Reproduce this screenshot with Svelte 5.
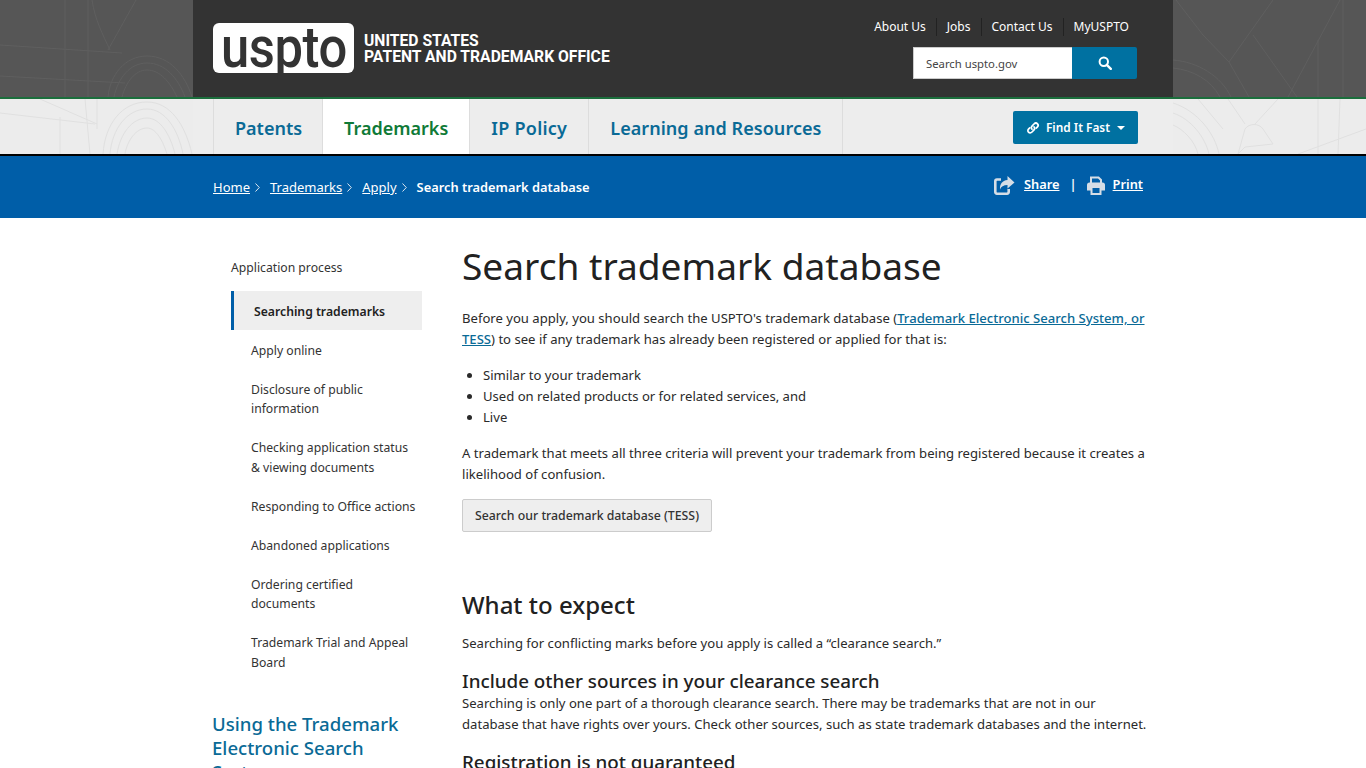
<script>
  const topLinks = ['About Us', 'Jobs', 'Contact Us', 'MyUSPTO'];
  const tabs = ['Patents', 'Trademarks', 'IP Policy', 'Learning and Resources'];
  const crumbs = ['Home', 'Trademarks', 'Apply'];
  const items = [
    'Apply online',
    'Disclosure of public information',
    'Checking application status &\u00a0viewing documents',
    'Responding to Office actions',
    'Abandoned applications',
    'Ordering certified documents',
    'Trademark Trial and Appeal Board'
  ];
</script>

<div class="page">
  <header class="top">
    <svg class="art" viewBox="0 0 193 97" aria-hidden="true">
      <g fill="none" stroke="#5f5f5f" stroke-width="1">
        <path d="M0 45L122 53M0 76L125 83M65 0V97M88 0V97M92 0C95 20 103 35 110 50M136 0L108 50" />
        <path d="M108 97C110 75 125 56 147 56C170 56 185 75 192 97M114 97C118 78 130 63 147 63C165 63 178 78 185 97M122 97C126 82 135 70 147 70C160 70 170 82 177 97" />
      </g>
    </svg>
    <svg class="art right" viewBox="0 0 193 97" aria-hidden="true">
      <g fill="none" stroke="#5f5f5f" stroke-width="1">
        <path d="M3 0L30 35L56 62L76 97M100 0L56 62M80 35L124 97M167 0L115 97M170 0V97M145 40V97" />
        <path d="M0 60C25 62 48 76 58 97M0 68C20 70 38 80 47 97" />
      </g>
    </svg>
    <div class="top-inner">
      <a class="brand" href="#top">
        <span class="logo"><span class="logo-text">uspto</span></span>
        <span class="office">UNITED STATES<br />PATENT AND TRADEMARK OFFICE</span>
      </a>
      <div class="top-right">
        <ul class="top-links">
          {#each topLinks as l}
            <li>{l}</li>
          {/each}
        </ul>
        <div class="search">
          <span class="search-field">Search uspto.gov</span>
          <span class="search-btn">
            <svg width="14" height="14" viewBox="0 0 14 14"><circle cx="5.800" cy="5.800" r="4.200" fill="none" stroke="#fff" stroke-width="2"/><path d="M8.800 8.800L12.800 12.800" stroke="#fff" stroke-width="2.400" stroke-linecap="round"/></svg>
          </span>
        </div>
      </div>
    </div>
  </header>

  <nav class="nav">
    <svg class="art" viewBox="0 0 193 55" aria-hidden="true">
      <g fill="none" stroke="#e0e0e0" stroke-width="1">
        <path d="M0 14L95 25M60 18V55M85 0L90 55M97 0V30M40 0L97 25" />
        <path d="M103 55C105 25 122 3 147 3C170 3 185 25 192 55M110 55C112 30 127 10 147 10C165 10 178 30 183 55M117 55C120 35 132 19 147 19C160 19 170 35 175 55M125 55C127 42 136 29 147 29C156 29 163 42 167 55" />
      </g>
    </svg>
    <svg class="art right" viewBox="0 0 193 55" aria-hidden="true">
      <g fill="none" stroke="#e0e0e0" stroke-width="1">
        <path d="M0 4C25 12 42 35 46 55M0 14C18 20 32 38 36 55M0 26C10 30 22 42 25 55M25 0L50 30M55 0L72 25M82 25L105 0" />
        <path d="M65 55L72 30C76 24 86 24 90 30L100 45L72 48ZM125 55L193 30M145 0V55M167 0L165 55" />
      </g>
    </svg>
    <div class="nav-inner">
      <ul class="tabs">
        {#each tabs as t}
          <li class:current={t === 'Trademarks'}>{t}</li>
        {/each}
      </ul>
      <span class="fast">
        <svg width="14" height="14" viewBox="0 0 14 14"><g fill="none" stroke="#fff" stroke-width="1.700" stroke-linecap="round"><path d="M6 8.200C5 7 5.200 5.800 6.200 4.800L8 3C9.100 1.900 10.600 1.900 11.500 2.800C12.400 3.700 12.300 5.100 11.300 6.100L10.200 7.200"/><path d="M8 5.800C9 7 8.800 8.200 7.800 9.200L6 11C4.900 12.100 3.400 12.100 2.500 11.200C1.600 10.300 1.700 8.900 2.700 7.900L3.800 6.800"/></g></svg>
        Find It Fast
        <i class="caret"></i>
      </span>
    </div>
  </nav>

  <div class="crumbbar">
    <div class="crumb-inner">
      <div class="crumbs">
        {#each crumbs as c}
          <span class="crumb"><a href="#top">{c}</a><svg class="sep" width="5" height="9" viewBox="0 0 5 9"><path d="M0.500 0.500L4.300 4.500L0.500 8.500" fill="none" stroke="#dbe6f0" stroke-width="1"/></svg></span>
        {/each}
        <strong>Search trademark database</strong>
      </div>
      <div class="tools">
        <svg class="tool-icon" width="21" height="19" viewBox="0 0 21 19"><path d="M7 3.500H3A1.800 1.800 0 0 0 1.300 5.300V16A1.800 1.800 0 0 0 3 17.700H13A1.800 1.800 0 0 0 14.700 16V13" fill="none" stroke="#d5dde6" stroke-width="2.600"/><path d="M13.500 0L20.500 6.500L13.500 12.500V9C9.500 9 7 10.500 6 13.500C5.500 8.500 8 4.500 13.500 4Z" fill="#d5dde6"/></svg>
        <a href="#top">Share</a>
        <span class="bar">|</span>
        <svg class="tool-icon" width="18" height="19" viewBox="0 0 18 19"><path d="M4 7V1.500H11.500L14 4V7" fill="none" stroke="#d5dde6" stroke-width="2"/><path d="M2.500 6.500H15.500A2.500 2.500 0 0 1 18 9V14.500H0V9A2.500 2.500 0 0 1 2.500 6.500Z" fill="#d5dde6"/><rect x="4.500" y="11" width="9" height="7" fill="#005ea8" stroke="#d5dde6" stroke-width="2"/></svg>
        <a href="#top">Print</a>
      </div>
    </div>
  </div>

  <div class="body">
    <aside class="side">
      <div class="side-head">Application process</div>
      <div class="side-active">Searching trademarks</div>
      <ul class="side-list">
        {#each items as it}
          <li>{it}</li>
        {/each}
      </ul>
      <h3 class="side-title">Using the Trademark Electronic Search System</h3>
    </aside>
    <main class="main">
      <h1>Search trademark database</h1>
      <p>Before you apply, you should search the USPTO's trademark database (<a href="#top">Trademark Electronic Search System, or TESS</a>) to see if any trademark has already been registered or applied for that is:</p>
      <ul class="bullets">
        <li>Similar to your trademark</li>
        <li>Used on related products or for related services, and</li>
        <li>Live</li>
      </ul>
      <p>A trademark that meets all three criteria will prevent your trademark from being registered because it creates a likelihood of confusion.</p>
      <span class="tess">Search our trademark database (TESS)</span>
      <h2>What to expect</h2>
      <p class="tight">Searching for conflicting marks before you apply is called a “clearance search.”</p>
      <h3>Include other sources in your clearance search</h3>
      <p>Searching is only one part of a thorough clearance search. There may be trademarks that are not in our database that have rights over yours. Check other sources, such as state trademark databases and the internet.</p>
      <h3>Registration is not guaranteed</h3>
    </main>
  </div>
</div>

<style>
  :global(html), :global(body) { margin: 0; height: 100%; overflow: hidden; background: #fff; }
  .page { height: 768px; overflow: hidden; font-family: "Noto Sans", "Open Sans", sans-serif; font-size: 13px; line-height: 1.5; color: #212121; }
  ul { list-style: none; margin: 0; padding: 0; }
  .art { position: absolute; left: 0; top: 0; width: 193px; height: 100%; }
  .art.right { left: auto; right: 0; width: 193px; }

  .top { position: relative; height: 97px; background: #565656; border-bottom: 2px solid #1b6e3c; }
  .top-inner { position: relative; width: 980px; height: 97px; margin: 0 auto; background: #333; display: flex; justify-content: space-between; box-sizing: border-box; padding: 0 36px 0 20px; }
  .brand { display: flex; align-items: center; height: 50px; margin-top: 23px; text-decoration: none; }
  .logo { position: relative; width: 141px; height: 50px; background: #fff; border-radius: 6px; display: block; }
  .logo-text { position: absolute; left: 8px; top: -10px; font-family: "Roboto", sans-serif; font-size: 58px; line-height: 68px; letter-spacing: -.5px; color: #333; font-weight: 500; transform: scaleX(.875); transform-origin: left center; }
  .office { margin-left: 10px; padding-top: 2px; color: #fff; font-family: "Roboto", "Noto Sans", sans-serif; font-weight: 700; font-size: 15.700px; line-height: 16px; }
  .top-right { display: flex; flex-direction: column; align-items: flex-end; padding-top: 18px; }
  .top-links { display: flex; color: #fff; font-size: 12px; line-height: 18px; margin-right: 8px; }
  .top-links li { padding: 0 10px; border-left: 1px solid #222; }
  .top-links li:first-child { border-left: 0; }
  .top-links li:last-child { padding-right: 0; }
  .search { display: flex; margin-top: 11px; height: 32px; }
  .search-field { width: 159px; box-sizing: border-box; padding-left: 12px; background: #fff; border: 1px solid #ccc; border-right: 0; font-size: 11.300px; line-height: 32px; color: #444; }
  .search-btn { width: 65px; background: #0071a1; border-radius: 0 2px 2px 0; display: flex; align-items: center; justify-content: center; }

  .nav { position: relative; height: 55px; background: #ececec; border-bottom: 2px solid #000; }
  .nav-inner { position: relative; width: 980px; height: 55px; margin: 0 auto; background: #ededed; display: flex; justify-content: space-between; box-sizing: border-box; padding: 0 35px 0 20px; }
  .tabs { display: flex; border-left: 1px solid #ddd; }
  .tabs li { padding: 0 21px; border-right: 1px solid #ddd; font-size: 18px; font-weight: 600; line-height: 58px; color: #0a6a96; }
  .tabs li:nth-child(1) { padding-right: 20px; }
  .tabs li:nth-child(3) { letter-spacing: .25px; }
  .tabs li:nth-child(4) { letter-spacing: .05px; }
  .tabs li.current { background: #fff; color: #0f7a37; }
  .fast { display: flex; align-items: center; gap: 6px; align-self: flex-start; margin-top: 12px; height: 33px; box-sizing: border-box; padding: 0 13px; background: #0071a1; border-radius: 2px; color: #fff; font-size: 11.850px; font-weight: 600; }
  .caret { width: 0; height: 0; margin-left: 1px; border: 4px solid transparent; border-top-color: #fff; border-bottom: 0; }

  .crumbbar { background: #005ea8; height: 62px; color: #fff; }
  .crumb-inner { width: 980px; margin: 0 auto; height: 62px; box-sizing: border-box; padding: 0 30px 0 20px; display: flex; justify-content: space-between; align-items: center; }
  .crumbs { display: flex; align-items: center; padding-top: 2px; }
  .crumb { margin-right: 10px; }
  .crumb a { color: #fff; }
  .sep { margin-left: 5px; }
  .crumbs strong { font-weight: 600; font-size: 12.850px; }
  .tools { display: flex; align-items: center; margin-top: -4px; font-weight: 600; font-size: 12.800px; }
  .tools a { color: #fff; margin-left: 9px; }
  .tools a:last-child { margin-left: 8px; }
  .bar { margin: 0 10px; }

  .body { width: 980px; margin: 0 auto; display: flex; box-sizing: border-box; padding: 0 20px; }
  .side { width: 249px; flex: none; box-sizing: border-box; padding: 40px 0 0 0; font-size: 12.200px; color: #333; }
  .side-head { margin-left: 18px; line-height: 19.500px; }
  .side-active { margin: 13px 0 0 18px; width: 191px; box-sizing: border-box; height: 39px; padding-left: 20px; border-left: 3px solid #005ea8; background: #eee; font-weight: 600; line-height: 41px; color: #212121; }
  .side-list { margin: 1px 0 0 38px; width: 167px; line-height: 19.500px; }
  .side-list li { padding: 10px 0 9.500px; }
  .side-title { margin: 30px 0 0 -1px; width: 210px; font-size: 18.600px; line-height: 24px; font-weight: 500; color: #0a6a96; }
  .main { width: 690px; flex: none; font-size: 13.100px; line-height: 21px; color: #2a2a2a; }
  h1 { margin: 24px 0 0; font-size: 37.100px; line-height: 48px; font-weight: 400; color: #212121; }
  .main p { margin: 0; }
  .main h1 + p { margin-top: 18px; }
  .main a { color: #0a6a96; font-weight: 500; }
  .bullets { list-style: disc; padding-left: 21px; margin: 15px 0; }
  .tess { display: inline-block; margin-top: 14px; height: 33px; box-sizing: border-box; padding: 0 12px; background: #eee; border: 1px solid #ccc; border-radius: 2px; font-size: 12.300px; line-height: 31px; font-weight: 500; color: #333; }
  h2 { margin: 58px 0 0; font-size: 24px; line-height: 30px; font-weight: 500; color: #212121; }
  .tight { margin-top: 13px !important; }
  .main h3 { margin: 15px 0 0; font-size: 18.800px; line-height: 24px; font-weight: 500; color: #212121; }
</style>
